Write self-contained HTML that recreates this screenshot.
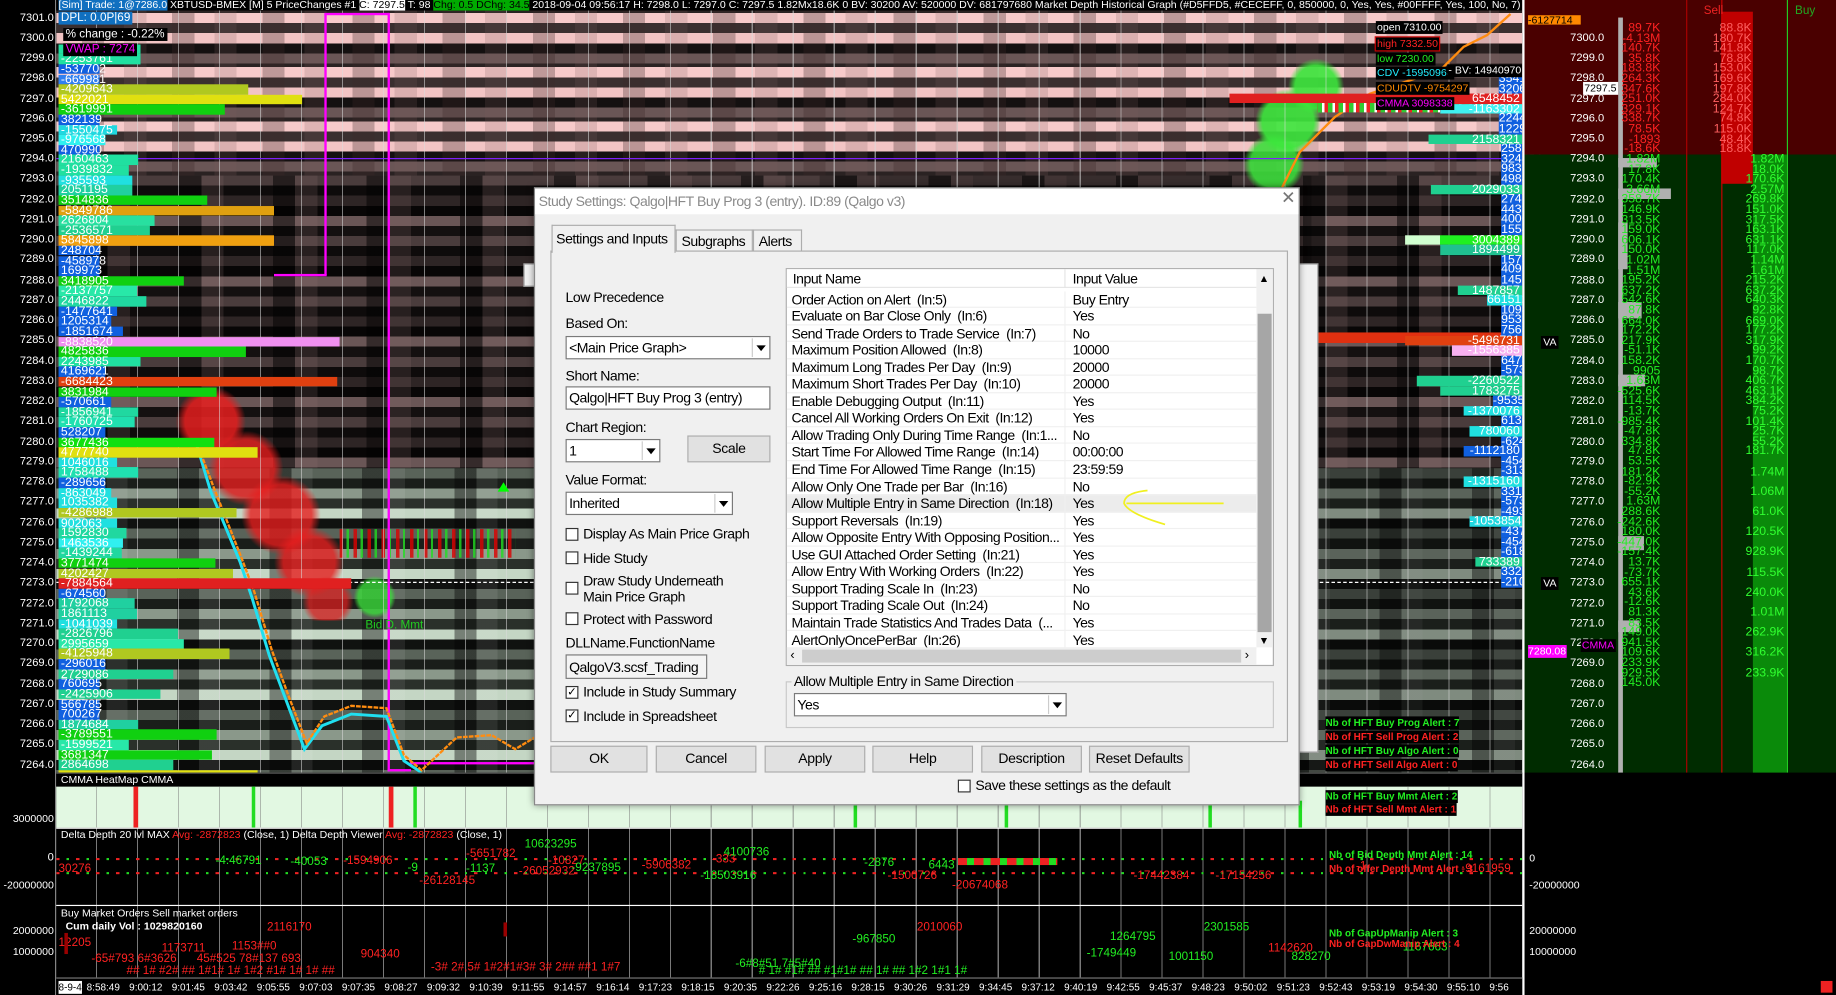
<!DOCTYPE html>
<html><head><meta charset="utf-8">
<style>
*{margin:0;padding:0;box-sizing:border-box}
html,body{width:1836px;height:995px;overflow:hidden;background:#000}
#w{position:absolute;left:0;top:0;width:1568px;height:850px;transform:scale(1.17092,1.17059);transform-origin:0 0;background:#000;font-family:"Liberation Sans",sans-serif;overflow:hidden}
.a{position:absolute}
.t{position:absolute;white-space:nowrap;font-size:10px;line-height:11px}
.ax{position:absolute;left:0;width:46px;text-align:right;color:#fff;font-size:9.5px;line-height:10px}
.lb{position:absolute;left:50px;height:8.6px;line-height:9px;font-size:10.5px;color:#fff;padding-left:2px;white-space:nowrap;overflow:visible}
.rv{position:absolute;right:0;height:8.6px;line-height:9px;font-size:10.5px;color:#fff;padding-right:2px;white-space:nowrap;text-align:right}
.dl{position:absolute;font-family:"Liberation Sans",sans-serif;font-size:12px;letter-spacing:-0.4px;color:#000;white-space:nowrap;line-height:14px}
.box{position:absolute;background:#fff;border:1px solid #7a7a7a}
.dd{position:absolute;right:1px;top:1px;bottom:1px;width:14px;background:#fff;border-left:1px solid #ccc}
.dd:after{content:"";position:absolute;left:3px;top:6px;border:4px solid transparent;border-top:5px solid #000}
.btn{position:absolute;background:#e1e1e1;border:1px solid #adadad;font-size:12px;letter-spacing:-0.3px;text-align:center;line-height:21px;height:23px}
.cb{position:absolute;width:11px;height:11px;border:1px solid #333;background:#fff;font-size:10px;line-height:9px;text-align:center}
.gr{position:absolute;left:0;right:0;height:14.55px;line-height:14px;font-size:12px;letter-spacing:-0.45px;border-bottom:1px solid #f0f0f0}
.gr span{position:absolute;left:4px}
.gr b{font-weight:normal;position:absolute;left:244px}
.pv{position:absolute;width:56px;text-align:right;font-size:10.5px;line-height:9px}
</style></head><body><div id="w">

<!-- heatmap background -->
<div class="a" style="left:48px;top:8px;width:1252px;height:142px;background:repeating-linear-gradient(90deg,rgba(0,0,0,0) 0 22px,rgba(60,40,40,.3) 22px 41px,rgba(0,0,0,0) 41px 58px,rgba(120,90,90,.2) 58px 77px),repeating-linear-gradient(180deg,#2a2222 0 3.2px,#f7caca 3.2px 11.8px,#3a2f2f 11.8px 20.4px,#f2c4c4 20.4px 29px,#141010 29px 37.6px,#6a5656 37.6px 46.2px)"></div>
<div class="a" style="left:48px;top:150px;width:1252px;height:250px;background:repeating-linear-gradient(90deg,rgba(0,0,0,0) 0 25px,rgba(0,0,0,.5) 25px 44px,rgba(140,110,110,.2) 44px 63px,rgba(0,0,0,0) 63px 80px),repeating-linear-gradient(180deg,#4a3c3c 0 8.6px,#0e0b0b 8.6px 17.2px,#2e2525 17.2px 25.8px,#080606 25.8px 34.4px,#6a5656 34.4px 43px,#141010 43px 51.6px)"></div>
<div class="a" style="left:48px;top:400px;width:1252px;height:261px;background:repeating-linear-gradient(90deg,rgba(0,0,0,0) 0 24px,rgba(0,0,0,.4) 24px 43px,rgba(255,255,255,.08) 43px 61px,rgba(0,0,0,0) 61px 79px),repeating-linear-gradient(180deg,#596359 0 8.6px,#1a1e1a 8.6px 17.2px,#8a988a 17.2px 25.8px,#2a302a 25.8px 34.4px,#c4d6c4 34.4px 43px,#101210 43px 51.6px)"></div>
<div class="a" style="left:460px;top:400px;width:840px;height:261px;background:rgba(0,0,0,.35)"></div>
<div class="a" style="left:700px;top:150px;width:420px;height:250px;background:rgba(0,0,0,.25)"></div>
<!-- red blobs -->
<div class="a" style="left:120px;top:330px;width:200px;height:200px;background:radial-gradient(circle at 30% 15%,rgba(230,30,30,.85) 0 22px,transparent 30px),radial-gradient(circle at 45% 35%,rgba(230,30,30,.8) 0 24px,transparent 32px),radial-gradient(circle at 60% 55%,rgba(230,30,30,.8) 0 26px,transparent 34px),radial-gradient(circle at 72% 75%,rgba(230,30,30,.8) 0 22px,transparent 30px),radial-gradient(circle at 80% 92%,rgba(230,30,30,.7) 0 16px,transparent 22px)"></div>
<div class="a" style="left:1040px;top:50px;width:120px;height:120px;background:radial-gradient(circle at 70% 20%,rgba(60,230,60,.9) 0 18px,transparent 24px),radial-gradient(circle at 50% 45%,rgba(60,230,60,.9) 0 22px,transparent 28px),radial-gradient(circle at 40% 75%,rgba(60,230,60,.85) 0 20px,transparent 26px)"></div>
<div class="a" style="left:290px;top:445px;width:150px;height:70px;background:repeating-linear-gradient(90deg,#d00 0 3px,transparent 3px 6px,#2d2 6px 8px,transparent 8px 12px);opacity:.8;clip-path:polygon(0 10%,100% 10%,100% 45%,0 45%)"></div>
<div class="a" style="left:300px;top:490px;width:40px;height:40px;background:radial-gradient(circle,rgba(60,220,60,.8) 0 14px,transparent 18px)"></div>
<!-- grid dots -->
<div class="a" style="left:48px;top:8px;width:1252px;height:827px;background:repeating-linear-gradient(90deg,transparent 0 34px,rgba(220,220,220,.55) 34px 35px)"></div>
<!-- lines -->
<div class="a" style="left:48px;top:135px;width:1252px;height:1px;background:#8020ff"></div>
<div class="a" style="left:48px;top:497px;width:1252px;height:1px;border-top:1px dashed #fff"></div>
<div class="a" style="left:277px;top:12px;width:2px;height:223px;background:#f0f"></div>
<div class="a" style="left:234px;top:234px;width:45px;height:2px;background:#f0f"></div>
<div class="a" style="left:277px;top:11px;width:55px;height:2px;background:#f0f"></div>
<div class="a" style="left:331px;top:11px;width:2px;height:648px;background:#f0f"></div>
<div class="a" style="left:331px;top:657px;width:20px;height:2px;background:#f0f"></div>
<div class="a" style="left:350px;top:651px;width:110px;height:2px;background:#f0f"></div>
<svg class="a" style="left:0;top:0" width="1568" height="850"><polyline points="168,380 180,420 205,480 215,510 230,560 245,600 260,640 275,620 300,610 330,612 345,650 360,660" fill="none" stroke="#20e0f0" stroke-width="2.5"/><polyline points="168,378 182,415 206,476 217,505 232,555 247,596 262,635 277,612 300,603 330,605 345,645 360,658 390,630 420,628 440,640 460,628" fill="none" stroke="#ff8c10" stroke-width="2" stroke-dasharray="4 1"/><polyline points="1095,160 1110,130 1140,100 1170,80 1230,60 1250,40 1270,30 1290,12" fill="none" stroke="#ff8c10" stroke-width="2"/><polygon points="425,420 430,412 435,420" fill="#0f0"/></svg>
<div class="t" style="left:1125px;top:284px;width:175px;height:9px;background:#e03010"></div>
<div class="t" style="left:1050px;top:80px;width:250px;height:8px;background:#e02020"></div>
<div class="t" style="left:1125px;top:88px;width:175px;height:8px;background:repeating-linear-gradient(90deg,#3c3 0 4px,#fff 4px 6px,#e22 6px 9px)"></div>

<!-- axis -->
<div class="a" style="left:0;top:0;width:48px;height:850px;background:#000;border-right:1px solid #888"></div>
<div class="ax" style="top:11px">7301.0</div><div class="ax" style="top:28px">7300.0</div><div class="ax" style="top:45px">7299.0</div><div class="ax" style="top:62px">7298.0</div><div class="ax" style="top:80px">7297.0</div><div class="ax" style="top:97px">7296.0</div><div class="ax" style="top:114px">7295.0</div><div class="ax" style="top:131px">7294.0</div><div class="ax" style="top:148px">7293.0</div><div class="ax" style="top:166px">7292.0</div><div class="ax" style="top:183px">7291.0</div><div class="ax" style="top:200px">7290.0</div><div class="ax" style="top:217px">7289.0</div><div class="ax" style="top:235px">7288.0</div><div class="ax" style="top:252px">7287.0</div><div class="ax" style="top:269px">7286.0</div><div class="ax" style="top:286px">7285.0</div><div class="ax" style="top:304px">7284.0</div><div class="ax" style="top:321px">7283.0</div><div class="ax" style="top:338px">7282.0</div><div class="ax" style="top:355px">7281.0</div><div class="ax" style="top:373px">7280.0</div><div class="ax" style="top:390px">7279.0</div><div class="ax" style="top:407px">7278.0</div><div class="ax" style="top:424px">7277.0</div><div class="ax" style="top:442px">7276.0</div><div class="ax" style="top:459px">7275.0</div><div class="ax" style="top:476px">7274.0</div><div class="ax" style="top:493px">7273.0</div><div class="ax" style="top:511px">7272.0</div><div class="ax" style="top:528px">7271.0</div><div class="ax" style="top:545px">7270.0</div><div class="ax" style="top:562px">7269.0</div><div class="ax" style="top:580px">7268.0</div><div class="ax" style="top:597px">7267.0</div><div class="ax" style="top:614px">7266.0</div><div class="ax" style="top:631px">7265.0</div><div class="ax" style="top:649px">7264.0</div>
<div class="ax" style="top:694px;font-size:9px">3000000</div><div class="ax" style="top:728px">0</div><div class="ax" style="top:751px;font-size:9px">-20000000</div><div class="ax" style="top:790px;font-size:9px">2000000</div><div class="ax" style="top:808px;font-size:9px">1000000</div>

<!-- left bars -->
<div class="lb" style="top:37.7px;width:70px;background:#20e0a0"></div>
<div class="lb" style="top:46.3px;width:70px;background:#20e0a0">-2253761</div>
<div class="lb" style="top:54.9px;width:35px;background:#1060e0">-537702</div>
<div class="lb" style="top:63.5px;width:35px;background:#3080f0">-669981</div>
<div class="lb" style="top:72.1px;width:162px;background:#b0c820">-4209643</div>
<div class="lb" style="top:80.8px;width:208px;background:#e0e010">5422021</div>
<div class="lb" style="top:89.4px;width:142px;background:#10d010">-3619991</div>
<div class="lb" style="top:98px;width:35px;background:#1060e0">382139</div>
<div class="lb" style="top:106.6px;width:50px;background:#20d8e0">-1550475</div>
<div class="lb" style="top:115.2px;width:40px;background:#30f0f0">-976568</div>
<div class="lb" style="top:123.8px;width:35px;background:#1060e0">470990</div>
<div class="lb" style="top:132.4px;width:68px;background:#20e0a0">2160463</div>
<div class="lb" style="top:141px;width:60px;background:#20e0a0">-1939832</div>
<div class="lb" style="top:149.7px;width:63px;background:#20e0e0">-935593</div>
<div class="lb" style="top:158.3px;width:63px;background:#20d0a0">2051195</div>
<div class="lb" style="top:166.9px;width:127px;background:#10d010">3514836</div>
<div class="lb" style="top:175.5px;width:184px;background:#e0a010">-5849786</div>
<div class="lb" style="top:184.1px;width:82px;background:#28e0a0">2626804</div>
<div class="lb" style="top:192.7px;width:78px;background:#20d090">-2536571</div>
<div class="lb" style="top:201.3px;width:184px;background:#f0a010">5845898</div>
<div class="lb" style="top:209.9px;width:35px;background:#1060e0">248704</div>
<div class="lb" style="top:218.6px;width:35px;background:#1060e0">-458978</div>
<div class="lb" style="top:227.2px;width:35px;background:#1060e0">169973</div>
<div class="lb" style="top:235.8px;width:107px;background:#10d010">3418905</div>
<div class="lb" style="top:244.4px;width:67px;background:#28e8a8">-2137757</div>
<div class="lb" style="top:253px;width:75px;background:#20d8a0">2446822</div>
<div class="lb" style="top:261.6px;width:50px;background:#1060e0">-1477641</div>
<div class="lb" style="top:270.2px;width:45px;background:#1060e0">1205314</div>
<div class="lb" style="top:278.8px;width:55px;background:#1060e0">-1851674</div>
<div class="lb" style="top:287.5px;width:240px;background:#f090f0">-8838520</div>
<div class="lb" style="top:296.1px;width:160px;background:#10d010">4825836</div>
<div class="lb" style="top:304.7px;width:70px;background:#20e0a0">2243985</div>
<div class="lb" style="top:313.3px;width:40px;background:#1060e0">4169621</div>
<div class="lb" style="top:321.9px;width:238px;background:#e04010">-6684423</div>
<div class="lb" style="top:330.5px;width:135px;background:#10d010">3831984</div>
<div class="lb" style="top:339.1px;width:45px;background:#1060e0">-570661</div>
<div class="lb" style="top:347.7px;width:68px;background:#20d8a0">-1856941</div>
<div class="lb" style="top:356.4px;width:65px;background:#20e0b0">-1760725</div>
<div class="lb" style="top:365px;width:40px;background:#1060e0">528207</div>
<div class="lb" style="top:373.6px;width:133px;background:#10e010">3677436</div>
<div class="lb" style="top:382.2px;width:170px;background:#e0e010">4777740</div>
<div class="lb" style="top:390.8px;width:50px;background:#20e0e0">1046016</div>
<div class="lb" style="top:399.4px;width:68px;background:#20e0b0">1758488</div>
<div class="lb" style="top:408px;width:40px;background:#1060e0">-289656</div>
<div class="lb" style="top:416.6px;width:45px;background:#20e0e0">-863049</div>
<div class="lb" style="top:425.3px;width:50px;background:#20e0e0">1035382</div>
<div class="lb" style="top:433.9px;width:152px;background:#b0c820">-4286988</div>
<div class="lb" style="top:442.5px;width:50px;background:#20e0e0">902063</div>
<div class="lb" style="top:451.1px;width:58px;background:#20d8a0">1592830</div>
<div class="lb" style="top:459.7px;width:55px;background:#30f0f0">1463536</div>
<div class="lb" style="top:468.3px;width:54px;background:#20d8a0">-1439244</div>
<div class="lb" style="top:476.9px;width:134px;background:#10d010">3771474</div>
<div class="lb" style="top:485.5px;width:149px;background:#b0c820">4202427</div>
<div class="lb" style="top:494.2px;width:250px;background:#e02020">-7884564</div>
<div class="lb" style="top:502.8px;width:40px;background:#1060e0">-674560</div>
<div class="lb" style="top:511.4px;width:65px;background:#20d0a0">1792068</div>
<div class="lb" style="top:520px;width:67px;background:#20d0a0">1861113</div>
<div class="lb" style="top:528.6px;width:50px;background:#20e0e0">-1041039</div>
<div class="lb" style="top:537.2px;width:102px;background:#20d090">-2826796</div>
<div class="lb" style="top:545.8px;width:107px;background:#28e8a8">2995659</div>
<div class="lb" style="top:554.4px;width:146px;background:#b0c820">-4125948</div>
<div class="lb" style="top:563.1px;width:40px;background:#1060e0">-296016</div>
<div class="lb" style="top:571.7px;width:98px;background:#20d090">2729086</div>
<div class="lb" style="top:580.3px;width:35px;background:#1060e0">760695</div>
<div class="lb" style="top:588.9px;width:87px;background:#20d090">-2425906</div>
<div class="lb" style="top:597.5px;width:35px;background:#1060e0">566785</div>
<div class="lb" style="top:606.1px;width:35px;background:#1060e0">700267</div>
<div class="lb" style="top:614.7px;width:68px;background:#20d0a0">1874684</div>
<div class="lb" style="top:623.3px;width:135px;background:#10d010">-3789551</div>
<div class="lb" style="top:632px;width:60px;background:#28e8a8">-1599521</div>
<div class="lb" style="top:640.6px;width:131px;background:#10d010">3681347</div>
<div class="lb" style="top:649.2px;width:98px;background:#20d090">2864698</div>
<div class="lb" style="top:657.8px;width:170px;height:3px;background:#e0e010"></div>
<div class="t" style="left:50px;top:10px;background:#1070c0;color:#fff;padding:0 2px">DPL: 0.0P|69</div>
<div class="t" style="left:54px;top:24px;background:#000;color:#fff;padding:0 2px">% change : -0.22%</div>
<div class="t" style="left:54px;top:37px;background:#000;color:#f0f;padding:0 2px">VWAP : 7274</div>
<div class="t" style="left:312px;top:529px;color:#2c2">Bid D. Mmt</div>

<!-- title bar -->
<div class="a" style="left:48px;top:0;width:1252px;height:9px;background:#000"></div>
<div class="t" style="left:50px;top:-1px;font-size:9px;color:#fff"><span style="background:#1070c0">[Sim] Trade: 1@7286.0</span> XBTUSD-BMEX [M] 5 PriceChanges #1 <span style="background:#fff;color:#000">C: 7297.5</span> T: 98 <span style="background:#0a0;color:#000">Chg: 0.5 DChg: 34.5</span> 2018-09-04 09:56:17 H: 7298.0 L: 7297.0 C: 7297.5 1.82Mx18.6K 0 BV: 30200 AV: 520000 DV: 681797680 Market Depth Historical Graph (#D5FFD5, #CECEFF, 0, 850000, 0, Yes, Yes, #00FFFF, Yes, 100, No, 7) HFT SURGE alert 3 <span style="color:#f22">Price Triggered By</span></div>

<!-- right value column of heatmap -->
<div class="a" style="left:1200px;top:60px;width:100px;height:460px;font-size:10.5px">
<div class="rv" style="top:3px;width:20px;background:#1060e0">354171</div><div class="rv" style="top:11.6px;width:20px;background:#1060e0">320688</div><div class="rv" style="top:20.2px;width:100px;background:#e02020">6548452</div><div class="rv" style="top:28.8px;width:70px;background:#40f0f0">-1163302</div><div class="rv" style="top:37.4px;width:20px;background:#1060e0">224478</div><div class="rv" style="top:46px;width:20px;background:#1060e0">122942</div><div class="rv" style="top:54.6px;width:80px;background:#20d090">2158321</div><div class="rv" style="top:63.2px;width:18px;background:#1060e0">258242</div><div class="rv" style="top:71.8px;width:18px;background:#1060e0">324834</div><div class="rv" style="top:80.4px;width:18px;background:#1060e0">98374</div><div class="rv" style="top:89px;width:18px;background:#1060e0">498462</div><div class="rv" style="top:97.6px;width:78px;background:#20d090">2029033</div><div class="rv" style="top:106.2px;width:18px;background:#1060e0">274728</div><div class="rv" style="top:114.8px;width:18px;background:#1060e0">44332</div><div class="rv" style="top:123.4px;width:18px;background:#1060e0">400619</div><div class="rv" style="top:132px;width:18px;background:#1060e0">155413</div><div class="rv" style="top:140.6px;width:100px;background:linear-gradient(90deg,#d0ffd0 0 30%,#20f020 30%)">3004389</div><div class="rv" style="top:149.2px;width:70px;background:#20c090">1894499</div><div class="rv" style="top:157.8px;width:18px;background:#1060e0">157356</div><div class="rv" style="top:166.4px;width:18px;background:#1060e0">409573</div><div class="rv" style="top:175px;width:18px;background:#1060e0">145192</div><div class="rv" style="top:183.6px;width:55px;background:#20d090">1487857</div><div class="rv" style="top:192.2px;width:30px;background:#20e0e0">661512</div><div class="rv" style="top:200.8px;width:18px;background:#1060e0">10985</div><div class="rv" style="top:209.4px;width:18px;background:#1060e0">95325</div><div class="rv" style="top:218px;width:18px;background:#1060e0">75658</div><div class="rv" style="top:226.6px;width:100px;background:#e04010">-5496731</div><div class="rv" style="top:235.2px;width:60px;background:#f8b0f0">-1556385</div><div class="rv" style="top:243.8px;width:18px;background:#1060e0">64783</div><div class="rv" style="top:252.4px;width:18px;background:#1060e0">-573248</div><div class="rv" style="top:261px;width:90px;background:#20d090">-2260522</div><div class="rv" style="top:269.6px;width:70px;background:#20d090">1783275</div><div class="rv" style="top:278.2px;width:25px;background:#1060e0">-953540</div><div class="rv" style="top:286.8px;width:50px;background:#20e0e0">-1370076</div><div class="rv" style="top:295.4px;width:18px;background:#1060e0">61304</div><div class="rv" style="top:304px;width:45px;background:#20e0e0">780060</div><div class="rv" style="top:312.6px;width:18px;background:#1060e0">-624379</div><div class="rv" style="top:321.2px;width:50px;background:#1060e0">-1112180</div><div class="rv" style="top:329.8px;width:18px;background:#1060e0">-454831</div><div class="rv" style="top:338.4px;width:18px;background:#1060e0">-313966</div><div class="rv" style="top:347px;width:50px;background:#20e0e0">-1315160</div><div class="rv" style="top:355.6px;width:18px;background:#1060e0">331501</div><div class="rv" style="top:364.2px;width:18px;background:#1060e0">-573016</div><div class="rv" style="top:372.8px;width:18px;background:#1060e0">-493957</div><div class="rv" style="top:381.4px;width:45px;background:#20d8e0">-1053854</div><div class="rv" style="top:390px;width:18px;background:#1060e0">-437872</div><div class="rv" style="top:398.6px;width:18px;background:#1060e0">-454347</div><div class="rv" style="top:407.2px;width:18px;background:#1060e0">-618431</div><div class="rv" style="top:415.8px;width:40px;background:#20d090">733389</div><div class="rv" style="top:424.4px;width:18px;background:#1060e0">332595</div><div class="rv" style="top:433px;width:18px;background:#1060e0">-210993</div>
</div>
<div class="t" style="left:1175px;top:18px;background:#000;color:#fff;font-size:9px;padding:0 1px">open 7310.00</div>
<div class="t" style="left:1175px;top:32px;background:#000;color:#f22;font-size:9px;padding:0 1px;outline:1px solid #c00">high 7332.50</div>
<div class="t" style="left:1175px;top:45px;background:#000;color:#2e2;font-size:9px;padding:0 1px">low 7230.00</div>
<div class="t" style="left:1175px;top:57px;background:#000;color:#2ef;font-size:9px;padding:0 1px">CDV -15950968</div>
<div class="t" style="left:1236px;top:55px;background:#000;color:#fff;font-size:9px;padding:0 1px">- BV: 14940970</div>
<div class="t" style="left:1175px;top:70px;background:#000;color:#f80;font-size:9px;padding:0 1px">CDUDTV -9754297</div>
<div class="t" style="left:1175px;top:83px;background:#000;color:#f0f;font-size:9px;padding:0 1px">CMMA 3098338</div>

<!-- right panel -->
<div class="a" style="left:1300px;top:0;width:268px;height:132px;background:#4a0000"></div>
<div class="a" style="left:1300px;top:132px;width:268px;height:528px;background:#002c00"></div>
<div class="a" style="left:1470px;top:10px;width:27px;height:147px;background:#c00000"></div>
<div class="a" style="left:1497px;top:132px;width:29px;height:528px;background:#0a8a0a"></div>
<div class="a" style="left:1440px;top:0;width:1px;height:660px;background:#a00"></div>
<div class="a" style="left:1470px;top:0;width:1px;height:660px;background:#c00"></div>
<div class="a" style="left:1526px;top:0;width:1px;height:660px;background:#2c2"></div>
<div class="a" style="left:1300px;top:0;width:2px;height:850px;background:#fff"></div>
<div class="t" style="left:1455px;top:4px;color:#e22;font-size:10px">Sell</div>
<div class="t" style="left:1533px;top:4px;color:#2a2;font-size:10px">Buy</div>
<div class="t" style="left:1305px;top:13px;background:#f80;color:#000;font-size:9px;width:45px;height:8px;line-height:8px">-6127714</div>
<div class="a" style="left:1382px;top:15px;width:4px;height:645px;background:#b0b0b0"></div>
<div class="a" style="left:1382px;top:135px;width:33px;height:8px;background:#b0b0b0"></div>
<div class="a" style="left:1382px;top:161px;width:45px;height:9px;background:#b0b0b0"></div>
<div class="a" style="left:1382px;top:190px;width:8px;height:40px;background:#b0b0b0"></div>
<div class="a" style="left:1382px;top:258px;width:20px;height:14px;background:#b0b0b0"></div>
<div class="a" style="left:1382px;top:320px;width:23px;height:10px;background:#b0b0b0"></div>
<div class="a" style="left:1382px;top:458px;width:22px;height:12px;background:#b0b0b0"></div>
<div class="a" style="left:1382px;top:530px;width:18px;height:10px;background:#b0b0b0"></div>
<div class="a" style="left:1300px;top:0;width:70px;height:660px;color:#fff;font-size:9.5px">
<div class="ax" style="left:0;width:70px;top:28px">7300.0</div><div class="ax" style="left:0;width:70px;top:45px">7299.0</div><div class="ax" style="left:0;width:70px;top:62px">7298.0</div><div class="ax" style="left:0;width:70px;top:80px">7297.0</div><div class="ax" style="left:0;width:70px;top:97px">7296.0</div><div class="ax" style="left:0;width:70px;top:114px">7295.0</div><div class="ax" style="left:0;width:70px;top:131px">7294.0</div><div class="ax" style="left:0;width:70px;top:148px">7293.0</div><div class="ax" style="left:0;width:70px;top:166px">7292.0</div><div class="ax" style="left:0;width:70px;top:183px">7291.0</div><div class="ax" style="left:0;width:70px;top:200px">7290.0</div><div class="ax" style="left:0;width:70px;top:217px">7289.0</div><div class="ax" style="left:0;width:70px;top:235px">7288.0</div><div class="ax" style="left:0;width:70px;top:252px">7287.0</div><div class="ax" style="left:0;width:70px;top:269px">7286.0</div><div class="ax" style="left:0;width:70px;top:286px">7285.0</div><div class="ax" style="left:0;width:70px;top:304px">7284.0</div><div class="ax" style="left:0;width:70px;top:321px">7283.0</div><div class="ax" style="left:0;width:70px;top:338px">7282.0</div><div class="ax" style="left:0;width:70px;top:355px">7281.0</div><div class="ax" style="left:0;width:70px;top:373px">7280.0</div><div class="ax" style="left:0;width:70px;top:390px">7279.0</div><div class="ax" style="left:0;width:70px;top:407px">7278.0</div><div class="ax" style="left:0;width:70px;top:424px">7277.0</div><div class="ax" style="left:0;width:70px;top:442px">7276.0</div><div class="ax" style="left:0;width:70px;top:459px">7275.0</div><div class="ax" style="left:0;width:70px;top:476px">7274.0</div><div class="ax" style="left:0;width:70px;top:493px">7273.0</div><div class="ax" style="left:0;width:70px;top:511px">7272.0</div><div class="ax" style="left:0;width:70px;top:528px">7271.0</div><div class="ax" style="left:0;width:70px;top:545px">7270.0</div><div class="ax" style="left:0;width:70px;top:562px">7269.0</div><div class="ax" style="left:0;width:70px;top:580px">7268.0</div><div class="ax" style="left:0;width:70px;top:597px">7267.0</div><div class="ax" style="left:0;width:70px;top:614px">7266.0</div><div class="ax" style="left:0;width:70px;top:631px">7265.0</div><div class="ax" style="left:0;width:70px;top:649px">7264.0</div>
</div>
<div class="t" style="left:1352px;top:70px;background:#fff;color:#000;font-size:9px;padding:0 1px">7297.5</div>
<div class="t" style="left:1316px;top:287px;background:#000;color:#fff;font-size:9px;padding:0 2px">VA</div>
<div class="t" style="left:1316px;top:493px;background:#000;color:#fff;font-size:9px;padding:0 2px">VA</div>
<div class="t" style="left:1350px;top:546px;background:#000;color:#f0f;font-size:9px;padding:0 1px">CMMA</div>
<div class="t" style="left:1305px;top:551px;background:#f0f;color:#fff;font-size:9px;width:33px">7280.08</div>
<div class="a" style="left:1362px;top:12px;font-size:10.5px;color:#f22">
<div class="pv" style="top:8px">89.7K</div><div class="pv" style="top:16.6px">-4.13M</div><div class="pv" style="top:25.2px">140.7K</div><div class="pv" style="top:33.8px">35.8K</div><div class="pv" style="top:42.4px">183.8K</div><div class="pv" style="top:51px">264.3K</div><div class="pv" style="top:59.6px">347.6K</div><div class="pv" style="top:68.2px">251.0K</div><div class="pv" style="top:76.8px">329.1K</div><div class="pv" style="top:85.4px">338.7K</div><div class="pv" style="top:94px">78.5K</div><div class="pv" style="top:102.6px">-1893</div><div class="pv" style="top:111.2px">-18.6K</div>
</div>
<div class="a" style="left:1362px;top:132px;font-size:10.5px;color:#2e2">
<div class="pv" style="top:0">1.82M</div><div class="pv" style="top:8.6px">17.8K</div><div class="pv" style="top:17.2px">170.4K</div><div class="pv" style="top:25.8px">3.66M</div><div class="pv" style="top:34.4px">358.7K</div><div class="pv" style="top:43px">146.9K</div><div class="pv" style="top:51.6px">313.5K</div><div class="pv" style="top:60.2px">159.0K</div><div class="pv" style="top:68.8px">606.1K</div><div class="pv" style="top:77.4px">150.0K</div><div class="pv" style="top:86px">1.02M</div><div class="pv" style="top:94.6px">1.51M</div><div class="pv" style="top:103.2px">195.2K</div><div class="pv" style="top:111.8px">637.2K</div><div class="pv" style="top:120.4px">542.6K</div><div class="pv" style="top:129px">87.8K</div><div class="pv" style="top:137.6px">664.0K</div><div class="pv" style="top:146.2px">172.2K</div><div class="pv" style="top:154.8px">217.9K</div><div class="pv" style="top:163.4px">-51.1K</div><div class="pv" style="top:172px">158.2K</div><div class="pv" style="top:180.6px">9905</div><div class="pv" style="top:189.2px">1.63M</div><div class="pv" style="top:197.8px">-525.6K</div><div class="pv" style="top:206.4px">114.5K</div><div class="pv" style="top:215px">-13.7K</div><div class="pv" style="top:223.6px">-985.4K</div><div class="pv" style="top:232.2px">-47.8K</div><div class="pv" style="top:240.8px">334.8K</div><div class="pv" style="top:249.4px">47.8K</div><div class="pv" style="top:258px">53.5K</div><div class="pv" style="top:266.6px">181.2K</div><div class="pv" style="top:275.2px">-82.9K</div><div class="pv" style="top:283.8px">-55.2K</div><div class="pv" style="top:292.4px">1.63M</div><div class="pv" style="top:301px">288.6K</div><div class="pv" style="top:309.6px">-242.6K</div><div class="pv" style="top:318.2px">180.0K</div><div class="pv" style="top:326.8px">-447.0K</div><div class="pv" style="top:335.4px">-157.4K</div><div class="pv" style="top:344px">13.7K</div><div class="pv" style="top:352.6px">-73.7K</div><div class="pv" style="top:361.2px">655.1K</div><div class="pv" style="top:369.8px">43.6K</div><div class="pv" style="top:378.4px">-12.6K</div><div class="pv" style="top:387px">81.3K</div><div class="pv" style="top:395.6px">83.5K</div><div class="pv" style="top:404.2px">149.0K</div><div class="pv" style="top:412.8px">941.5K</div><div class="pv" style="top:421.4px">109.6K</div><div class="pv" style="top:430px">233.9K</div><div class="pv" style="top:438.6px">929.5K</div><div class="pv" style="top:447.2px">145.0K</div>
</div>
<div class="a" style="left:1440px;top:20px;font-size:10.5px;color:#ff6060">
<div class="pv" style="top:0">88.8K</div><div class="pv" style="top:8.6px">180.7K</div><div class="pv" style="top:17.2px">141.8K</div><div class="pv" style="top:25.8px">78.8K</div><div class="pv" style="top:34.4px">153.0K</div><div class="pv" style="top:43px">169.6K</div><div class="pv" style="top:51.6px">197.8K</div><div class="pv" style="top:60.2px">284.0K</div><div class="pv" style="top:68.8px">124.7K</div><div class="pv" style="top:77.4px">74.8K</div><div class="pv" style="top:86px">115.0K</div><div class="pv" style="top:94.6px">48.4K</div><div class="pv" style="top:103.2px">18.8K</div>
</div>
<div class="a" style="left:1468px;top:132px;font-size:10.5px;color:#30ff30">
<div class="pv" style="top:0">1.82M</div><div class="pv" style="top:8.6px">18.0K</div><div class="pv" style="top:17.2px">170.6K</div><div class="pv" style="top:25.8px">2.57M</div><div class="pv" style="top:34.4px">269.8K</div><div class="pv" style="top:43px">151.0K</div><div class="pv" style="top:51.6px">317.5K</div><div class="pv" style="top:60.2px">163.1K</div><div class="pv" style="top:68.8px">631.1K</div><div class="pv" style="top:77.4px">117.0K</div><div class="pv" style="top:86px">1.14M</div><div class="pv" style="top:94.6px">1.61M</div><div class="pv" style="top:103.2px">215.2K</div><div class="pv" style="top:111.8px">637.2K</div><div class="pv" style="top:120.4px">640.3K</div><div class="pv" style="top:129px">92.8K</div><div class="pv" style="top:137.6px">669.0K</div><div class="pv" style="top:146.2px">177.2K</div><div class="pv" style="top:154.8px">317.9K</div><div class="pv" style="top:163.4px">99.2K</div><div class="pv" style="top:172px">170.7K</div><div class="pv" style="top:180.6px">98.7K</div><div class="pv" style="top:189.2px">406.7K</div><div class="pv" style="top:197.8px">463.1K</div><div class="pv" style="top:206.4px">384.2K</div><div class="pv" style="top:215px">75.2K</div><div class="pv" style="top:223.6px">101.4K</div><div class="pv" style="top:232.2px">25.7K</div><div class="pv" style="top:240.8px">55.2K</div><div class="pv" style="top:249.4px">181.7K</div><div class="pv" style="top:266.6px">1.74M</div><div class="pv" style="top:283.8px">1.06M</div><div class="pv" style="top:301px">61.0K</div><div class="pv" style="top:318.2px">120.5K</div><div class="pv" style="top:335.4px">928.9K</div><div class="pv" style="top:352.6px">115.5K</div><div class="pv" style="top:369.8px">240.0K</div><div class="pv" style="top:387px">1.01M</div><div class="pv" style="top:404.2px">262.9K</div><div class="pv" style="top:421.4px">316.2K</div><div class="pv" style="top:438.6px">233.9K</div>
</div>

<!-- bottom panels -->
<div class="a" style="left:48px;top:660px;width:1252px;height:12px;background:#000;border-top:1px solid #555"></div>
<div class="t" style="left:52px;top:661px;color:#fff;font-size:9px">CMMA HeatMap  CMMA</div>
<div class="a" style="left:48px;top:672px;width:1252px;height:35px;background:#e2f8e2"></div>
<div class="a" style="left:48px;top:672px;width:1252px;height:35px;background:repeating-linear-gradient(90deg,transparent 0 34px,rgba(120,120,120,.5) 34px 35px)"></div>
<div class="a" style="left:114px;top:672px;width:4px;height:35px;background:#e22"></div>
<div class="a" style="left:332px;top:672px;width:4px;height:35px;background:#e22"></div>
<div class="a" style="left:215px;top:672px;width:3px;height:35px;background:#2d2"></div>
<div class="a" style="left:353px;top:672px;width:3px;height:35px;background:#2d2"></div>
<div class="a" style="left:729px;top:684px;width:3px;height:23px;background:#2d2"></div>
<div class="a" style="left:1032px;top:684px;width:3px;height:23px;background:#2d2"></div>
<div class="a" style="left:1109px;top:684px;width:3px;height:23px;background:#2d2"></div>
<div class="a" style="left:858px;top:684px;width:3px;height:23px;background:#2d2"></div>
<div class="a" style="left:48px;top:707px;width:1252px;height:1px;background:#fff"></div>
<div class="t" style="left:52px;top:708px;color:#fff;font-size:9px">Delta Depth 20 lvl MAX <span style="color:#f22">Avg: -2872823</span>  (Close, 1)  Delta Depth Viewer <span style="color:#f22">Avg: -2872823</span>  (Close, 1)</div>
<div class="a" style="left:48px;top:733px;width:1252px;height:30px;background:repeating-linear-gradient(90deg,#e22 0 3px,transparent 3px 9px,#2d2 9px 11px,transparent 11px 17px);clip-path:polygon(0 0,100% 0,100% 6%,0 6%,0 40%,100% 40%,100% 46%,0 46%)"></div>
<div class="a" style="left:818px;top:733px;width:85px;height:6px;background:repeating-linear-gradient(90deg,#e22 0 8px,#2d2 8px 14px)"></div>
<div class="a" style="left:48px;top:737px;width:1252px;height:40px;font-size:10px">
<span class="t" style="left:2px;top:0;color:#f22">30276</span><span class="t" style="left:136px;top:-7px;color:#2e2">-4.46791</span><span class="t" style="left:200px;top:-6px;color:#2e2">-40053</span><span class="t" style="left:245px;top:-7px;color:#f22">-1594906</span><span class="t" style="left:300px;top:-1px;color:#2e2">-9</span><span class="t" style="left:310px;top:10px;color:#f22">-26128145</span><span class="t" style="left:350px;top:-13px;color:#f22">-5651782</span><span class="t" style="left:400px;top:-21px;color:#2e2">10623295</span><span class="t" style="left:395px;top:2px;color:#f22">-26052932</span><span class="t" style="left:420px;top:-7px;color:#f22">-10827</span><span class="t" style="left:440px;top:-1px;color:#2e2">-9237895</span><span class="t" style="left:350px;top:0px;color:#2e2">-1137</span><span class="t" style="left:500px;top:-3px;color:#f22">-5906382</span><span class="t" style="left:560px;top:-8px;color:#f22">-333</span><span class="t" style="left:550px;top:6px;color:#2e2">-18503916</span><span class="t" style="left:570px;top:-14px;color:#2e2">4100736</span><span class="t" style="left:690px;top:-5px;color:#2e2">-2876</span><span class="t" style="left:710px;top:6px;color:#f22">-1500726</span><span class="t" style="left:745px;top:-3px;color:#2e2">6443</span><span class="t" style="left:765px;top:14px;color:#f22">-20674068</span><span class="t" style="left:920px;top:6px;color:#f22">-17442384</span><span class="t" style="left:990px;top:6px;color:#f22">-17154256</span><span class="t" style="left:1200px;top:0;color:#f22">-9161959</span><span class="t" style="left:1110px;top:-2px;color:#f22">-1</span>
</div>
<div class="a" style="left:48px;top:773px;width:1252px;height:1px;background:#fff"></div>
<div class="t" style="left:52px;top:775px;color:#fff;font-size:9px">Buy Market Orders  Sell market orders</div>
<div class="t" style="left:56px;top:786px;color:#fff;font-size:9px;font-weight:bold">Cum daily Vol : 1029820160</div>
<div class="a" style="left:48px;top:800px;width:1252px;height:35px;font-size:10px">
<span class="t" style="left:2px;top:0;color:#f22">12205</span><span class="t" style="left:180px;top:-13px;color:#f22">2116170</span><span class="t" style="left:90px;top:5px;color:#f22">1173711</span><span class="t" style="left:30px;top:14px;color:#f22">-65#793 6#3626</span><span class="t" style="left:120px;top:14px;color:#f22">45#525 78#137 693</span><span class="t" style="left:150px;top:3px;color:#f22">1153##0</span><span class="t" style="left:260px;top:10px;color:#f22">904340</span><span class="t" style="left:320px;top:21px;color:#f22">-3#  2#,5#  1#2#1#3#  3#  2##  ##1  1#7</span><span class="t" style="left:580px;top:18px;color:#2e2">-6#8#51  7#5#40</span><span class="t" style="left:735px;top:-13px;color:#f22">2010060</span><span class="t" style="left:680px;top:-3px;color:#2e2">-967850</span><span class="t" style="left:880px;top:9px;color:#2e2">-1749449</span><span class="t" style="left:980px;top:-13px;color:#2e2">2301585</span><span class="t" style="left:1035px;top:5px;color:#f22">1142620</span><span class="t" style="left:1150px;top:4px;color:#2e2">1167663</span><span class="t" style="left:1055px;top:12px;color:#2e2">828270</span><span class="t" style="left:950px;top:12px;color:#2e2">1001150</span><span class="t" style="left:900px;top:-5px;color:#2e2">1264795</span><span class="t" style="left:60px;top:24px;color:#f22">##  1#  #2#  ##  1#1#  1#  1#2  #1#  1#  1#  ##</span><span class="t" style="left:600px;top:24px;color:#2e2">#  1#  #1#  ##  #1#1#  ##  1#  ##  1#2  1#1  1#</span>
</div>
<div class="a" style="left:55px;top:797px;width:3px;height:18px;background:#900"></div>
<div class="a" style="left:430px;top:788px;width:3px;height:12px;background:#900"></div>
<div class="t" style="left:1132px;top:612px;background:#000;color:#2e2;font-size:8.5px;font-weight:bold">Nb of HFT Buy Prog Alert : 7</div>
<div class="t" style="left:1132px;top:624px;background:#000;color:#f22;font-size:8.5px;font-weight:bold">Nb of HFT Sell Prog Alert : 2</div>
<div class="t" style="left:1132px;top:636px;background:#000;color:#2e2;font-size:8.5px;font-weight:bold">Nb of HFT Buy Algo Alert : 0</div>
<div class="t" style="left:1132px;top:648px;background:#000;color:#f22;font-size:8.5px;font-weight:bold">Nb of HFT Sell Algo Alert : 0</div>
<div class="t" style="left:1132px;top:675px;background:#000;color:#2e2;font-size:8.5px;font-weight:bold">Nb of HFT Buy Mmt Alert : 2</div>
<div class="t" style="left:1132px;top:686px;background:#000;color:#f22;font-size:8.5px;font-weight:bold">Nb of HFT Sell Mmt Alert : 1</div>
<div class="t" style="left:1135px;top:725px;color:#2e2;font-size:8.5px;font-weight:bold">Nb of Bid Depth Mmt Alert : 14</div>
<div class="t" style="left:1135px;top:737px;color:#f22;font-size:8.5px;font-weight:bold">Nb of offer Depth Mmt Alert : 3</div>
<div class="t" style="left:1135px;top:792px;color:#2e2;font-size:8.5px;font-weight:bold">Nb of GapUpManip Alert : 3</div>
<div class="t" style="left:1135px;top:801px;color:#f22;font-size:8.5px;font-weight:bold">Nb of GapDwManip Alert : 4</div>
<div class="t" style="left:1306px;top:751px;color:#fff;font-size:9px">-20000000</div>
<div class="t" style="left:1306px;top:728px;color:#fff;font-size:9px">0</div>
<div class="t" style="left:1306px;top:790px;color:#fff;font-size:9px">20000000</div>
<div class="t" style="left:1306px;top:808px;color:#fff;font-size:9px">10000000</div>
<div class="a" style="left:1555px;top:838px;width:10px;height:10px;background:#e22"></div>
<!-- time axis -->
<div class="a" style="left:48px;top:835px;width:1252px;height:15px;background:#000;border-top:1px solid #777"></div>
<div class="t" style="left:50px;top:838px;background:#fff;color:#000;font-size:8.5px">8-9-4</div>
<div class="a" style="left:74px;top:838px;font-size:8.5px;color:#fff;white-space:nowrap;word-spacing:5.6px;line-height:10px">8:58:49 9:00:12 9:01:45 9:03:42 9:05:55 9:07:03 9:07:35 9:08:27 9:09:32 9:10:39 9:11:55 9:14:57 9:16:14 9:17:23 9:18:15 9:20:35 9:22:26 9:25:16 9:28:15 9:30:26 9:31:29 9:34:45 9:37:12 9:40:19 9:42:55 9:45:37 9:48:23 9:50:02 9:51:23 9:52:43 9:53:19 9:54:30 9:55:10 9:56</div>

<!-- behind windows -->
<div class="a" style="left:447px;top:225px;width:12px;height:20px;background:#f0f0f0;border:1px solid #999"></div>
<div class="a" style="left:1100px;top:225px;width:26px;height:418px;background:#f0f0f0;border:1px solid #999"></div>

<!-- dialog -->
<div class="a" style="left:456px;top:160px;width:654px;height:528px;background:#f0f0f0;border:1px solid #888;box-shadow:0 0 6px rgba(0,0,0,.5)"></div>
<div class="a" style="left:457px;top:161px;width:652px;height:22px;background:#fff"></div>
<div class="dl" style="left:460px;top:165px;color:#8a8a8a">Study Settings: Qalgo|HFT Buy Prog 3 (entry). ID:89 (Qalgo v3)</div>
<div class="dl" style="left:1094px;top:163px;color:#777;font-size:15px">✕</div>
<div class="a" style="left:470px;top:214px;width:630px;height:420px;border:1px solid #adadad;background:#f0f0f0"></div>
<div class="a" style="left:471px;top:192px;width:106px;height:24px;background:#f0f0f0;border:1px solid #adadad;border-bottom:none"></div>
<div class="dl" style="left:475px;top:197px">Settings and Inputs</div>
<div class="a" style="left:577px;top:196px;width:66px;height:18px;border:1px solid #adadad;border-bottom:none"></div>
<div class="dl" style="left:582px;top:199px">Subgraphs</div>
<div class="a" style="left:643px;top:196px;width:42px;height:18px;border:1px solid #adadad;border-bottom:none"></div>
<div class="dl" style="left:648px;top:199px">Alerts</div>

<div class="dl" style="left:483px;top:247px">Low Precedence</div>
<div class="dl" style="left:483px;top:269px">Based On:</div>
<div class="box" style="left:483px;top:287px;width:175px;height:20px"><div class="dl" style="left:2px;top:2px">&lt;Main Price Graph&gt;</div><div class="dd"></div></div>
<div class="dl" style="left:483px;top:314px">Short Name:</div>
<div class="box" style="left:483px;top:330px;width:175px;height:20px"><div class="dl" style="left:2px;top:2px">Qalgo|HFT Buy Prog 3 (entry)</div></div>
<div class="dl" style="left:483px;top:358px">Chart Region:</div>
<div class="box" style="left:483px;top:375px;width:81px;height:20px"><div class="dl" style="left:2px;top:2px">1</div><div class="dd"></div></div>
<div class="btn" style="left:587px;top:372px;width:71px">Scale</div>
<div class="dl" style="left:483px;top:403px">Value Format:</div>
<div class="box" style="left:483px;top:420px;width:143px;height:20px"><div class="dl" style="left:2px;top:2px">Inherited</div><div class="dd"></div></div>
<div class="cb" style="left:483px;top:451px"></div><div class="dl" style="left:498px;top:449px">Display As Main Price Graph</div>
<div class="cb" style="left:483px;top:471px"></div><div class="dl" style="left:498px;top:470px">Hide Study</div>
<div class="cb" style="left:483px;top:497px"></div><div class="dl" style="left:498px;top:489px">Draw Study Underneath<br>Main Price Graph</div>
<div class="cb" style="left:483px;top:523px"></div><div class="dl" style="left:498px;top:522px">Protect with Password</div>
<div class="dl" style="left:483px;top:542px">DLLName.FunctionName</div>
<div class="box" style="left:483px;top:559px;width:121px;height:21px;background:#f4f4f4"><div class="dl" style="left:2px;top:3px">QalgoV3.scsf_Trading</div></div>
<div class="cb" style="left:483px;top:586px">✓</div><div class="dl" style="left:498px;top:584px">Include in Study Summary</div>
<div class="cb" style="left:483px;top:606px">✓</div><div class="dl" style="left:498px;top:605px">Include in Spreadsheet</div>

<div class="a" style="left:671px;top:229px;width:417px;height:340px;background:#fff;border:1px solid #adadad"></div>
<div class="a" style="left:672px;top:230px;width:401px;height:16px;background:#fff;border-bottom:1px solid #e5e5e5"></div>
<div class="a" style="left:909px;top:230px;width:1px;height:16px;background:#e5e5e5"></div>
<div class="dl" style="left:677px;top:231px">Input Name</div><div class="dl" style="left:916px;top:231px">Input Value</div>
<div class="a" style="left:672px;top:248.5px;width:401px;height:305px;overflow:hidden">
<div class="gr" style="top:0"><span>Order Action on Alert &nbsp;(In:5)</span><b>Buy Entry</b></div>
<div class="gr" style="top:14.55px"><span>Evaluate on Bar Close Only &nbsp;(In:6)</span><b>Yes</b></div>
<div class="gr" style="top:29.1px"><span>Send Trade Orders to Trade Service &nbsp;(In:7)</span><b>No</b></div>
<div class="gr" style="top:43.65px"><span>Maximum Position Allowed &nbsp;(In:8)</span><b>10000</b></div>
<div class="gr" style="top:58.2px"><span>Maximum Long Trades Per Day &nbsp;(In:9)</span><b>20000</b></div>
<div class="gr" style="top:72.75px"><span>Maximum Short Trades Per Day &nbsp;(In:10)</span><b>20000</b></div>
<div class="gr" style="top:87.3px"><span>Enable Debugging Output &nbsp;(In:11)</span><b>Yes</b></div>
<div class="gr" style="top:101.85px"><span>Cancel All Working Orders On Exit &nbsp;(In:12)</span><b>Yes</b></div>
<div class="gr" style="top:116.4px"><span>Allow Trading Only During Time Range &nbsp;(In:1...</span><b>No</b></div>
<div class="gr" style="top:130.95px"><span>Start Time For Allowed Time Range &nbsp;(In:14)</span><b>00:00:00</b></div>
<div class="gr" style="top:145.5px"><span>End Time For Allowed Time Range &nbsp;(In:15)</span><b>23:59:59</b></div>
<div class="gr" style="top:160.05px"><span>Allow Only One Trade per Bar &nbsp;(In:16)</span><b>No</b></div>
<div class="gr" style="top:174.6px;background:#ececec"><span>Allow Multiple Entry in Same Direction &nbsp;(In:18)</span><b>Yes</b></div>
<div class="gr" style="top:189.15px"><span>Support Reversals &nbsp;(In:19)</span><b>Yes</b></div>
<div class="gr" style="top:203.7px"><span>Allow Opposite Entry With Opposing Position...</span><b>Yes</b></div>
<div class="gr" style="top:218.25px"><span>Use GUI Attached Order Setting &nbsp;(In:21)</span><b>Yes</b></div>
<div class="gr" style="top:232.8px"><span>Allow Entry With Working Orders &nbsp;(In:22)</span><b>Yes</b></div>
<div class="gr" style="top:247.35px"><span>Support Trading Scale In &nbsp;(In:23)</span><b>No</b></div>
<div class="gr" style="top:261.9px"><span>Support Trading Scale Out &nbsp;(In:24)</span><b>No</b></div>
<div class="gr" style="top:276.45px"><span>Maintain Trade Statistics And Trades Data &nbsp;(...</span><b>Yes</b></div>
<div class="gr" style="top:291px"><span>AlertOnlyOncePerBar &nbsp;(In:26)</span><b>Yes</b></div>
<div class="a" style="left:237px;top:0;width:1px;height:305px;background:#f0f0f0"></div>
</div>
<div class="a" style="left:1073px;top:230px;width:14px;height:323px;background:#f0f0f0"></div>
<div class="a" style="left:1074px;top:268px;width:12px;height:272px;background:#a6a6a6"></div>
<div class="dl" style="left:1075px;top:231px;font-size:9px">▲</div>
<div class="dl" style="left:1075px;top:540px;font-size:9px">▼</div>
<div class="a" style="left:672px;top:553px;width:401px;height:15px;background:#f0f0f0"></div>
<div class="a" style="left:685px;top:555px;width:375px;height:11px;background:#cdcdcd"></div>
<div class="dl" style="left:675px;top:553px;font-size:11px">‹</div><div class="dl" style="left:1063px;top:553px;font-size:11px">›</div>
<svg class="a" style="left:950px;top:415px" width="100" height="40"><path d="M95 15 L12 15 M30 4 Q10 6 10 15 Q14 24 45 33" fill="none" stroke="#f0f020" stroke-width="1.5"/></svg>

<div class="a" style="left:671px;top:582px;width:417px;height:40px;border:1px solid #c8c8c8"></div>
<div class="dl" style="left:676px;top:575px;background:#f0f0f0;padding:0 2px">Allow Multiple Entry in Same Direction</div>
<div class="box" style="left:678px;top:592px;width:233px;height:20px"><div class="dl" style="left:2px;top:2px">Yes</div><div class="dd"></div></div>

<div class="btn" style="left:470px;top:637px;width:83px">OK</div>
<div class="btn" style="left:560px;top:637px;width:86px">Cancel</div>
<div class="btn" style="left:653px;top:637px;width:86px">Apply</div>
<div class="btn" style="left:745px;top:637px;width:86px">Help</div>
<div class="btn" style="left:838px;top:637px;width:86px">Description</div>
<div class="btn" style="left:930px;top:637px;width:86px">Reset Defaults</div>
<div class="cb" style="left:818px;top:666px"></div><div class="dl" style="left:833px;top:664px">Save these settings as the default</div>
</div></body></html>
